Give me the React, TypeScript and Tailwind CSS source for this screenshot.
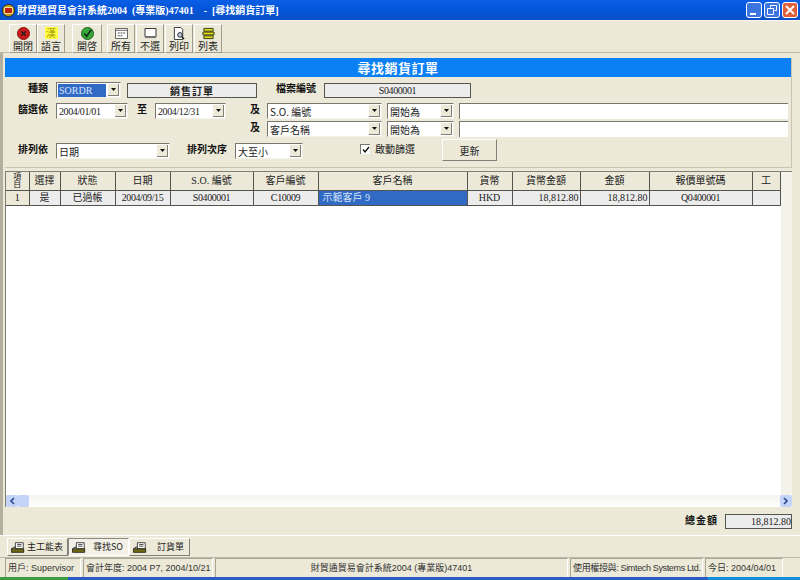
import type { ReactNode } from 'react';

const cjk = '"Noto Sans CJK TC", "Noto Sans CJK SC", sans-serif';
const dataFont = `"Liberation Serif", ${cjk}`;
const uiFont = `"Liberation Sans", ${cjk}`;

const columns = [
  { label: '項目', w: 23 },
  { label: '選擇', w: 31 },
  { label: '狀態', w: 55 },
  { label: '日期', w: 55 },
  { label: 'S.O. 編號', w: 83 },
  { label: '客戶編號', w: 65 },
  { label: '客戶名稱', w: 149 },
  { label: '貨幣', w: 45 },
  { label: '貨幣金額', w: 68 },
  { label: '金額', w: 69 },
  { label: '報價單號碼', w: 103 },
  { label: '工', w: 28 },
];

const row = ['1', '是', '已過帳', '2004/09/15', 'S0400001', 'C10009', '示範客戶 9', 'HKD', '18,812.80', '18,812.80', 'Q0400001', ''];

function ToolButton({ label, icon, w = 'w-[28px]' }: { label: string; icon: ReactNode; w?: string }) {
  return (
    <div className={`${w} h-[29px] flex flex-col items-center bg-[#ece9d8] border-r border-b border-[#a09c8c] border-l border-l-white border-t border-t-white`}>
      <div className="h-[14px] mt-px flex items-center justify-center">{icon}</div>
      <div className="text-[10px] leading-[11px] text-[#222] whitespace-nowrap">{label}</div>
    </div>
  );
}

function Arrow() {
  return (
    <div className="w-[11px] h-[12px] shrink-0 mr-px flex items-center justify-center bg-[#ece9d8] border-r border-b border-[#808078]">
      <svg width="7" height="4" viewBox="0 0 7 4"><path d="M1 0h5L3.5 3z" fill="#111" /></svg>
    </div>
  );
}

function Combo({ w, text, serif, selected, tight }: { w: string; text: string; serif?: boolean; selected?: boolean; tight?: boolean }) {
  return (
    <div className={`${w} h-[16px] shrink-0 flex items-center bg-white border-t border-l border-[#77776f] border-r border-r-[#f4f2e8] border-b border-b-[#f4f2e8]`}>
      <div
        className={`flex-1 min-w-0 h-[13px] ml-px mr-[2px] pl-px text-[10px] leading-[13px] whitespace-nowrap overflow-hidden ${selected ? 'bg-[#316ac5] text-[#d8e4f8]' : 'text-[#222]'} ${tight ? 'tracking-[-0.4px]' : ''}`}
        style={{ fontFamily: serif ? dataFont : cjk }}
      >
        {text}
      </div>
      <Arrow />
    </div>
  );
}

function Label({ w, text, className = '' }: { w: string; text: string; className?: string }) {
  return <div className={`${w} shrink-0 text-right text-[10px] leading-[11px] pb-[5px] font-bold text-[#111] whitespace-nowrap ${className}`}>{text}</div>;
}

function ReadBox({ w, text, bold, serif }: { w: string; text: string; bold?: boolean; serif?: boolean }) {
  return (
    <div
      className={`${w} h-[15px] shrink-0 flex items-center justify-center bg-[#ececec] border border-[#55554f] text-[10px] text-[#222] ${bold ? 'font-bold tracking-[1px]' : ''} ${serif ? 'tracking-[-0.4px]' : ''}`}
      style={{ fontFamily: serif ? dataFont : cjk }}
    >
      {text}
    </div>
  );
}

function TabIcon() {
  return (
    <svg width="14" height="11" viewBox="0 0 16 12" className="shrink-0">
      <path d="M5 .5h9v7H5z" fill="#fff" stroke="#333" />
      <path d="M7 2.5h5M7 4.5h5" stroke="#333" />
      <path d="M.5 7.5h14v4H.5z" fill="#6f6a10" stroke="#222" />
      <path d="M.5 7.5l3-2h2" fill="none" stroke="#222" />
    </svg>
  );
}

function Tab({ w, text, gap, active }: { w: string; text: string; gap: string; active?: boolean }) {
  return (
    <div className={`${w} h-[18px] flex items-center pl-[3px] text-[9px] text-[#222] whitespace-nowrap border ${active ? 'bg-[#f3f1e6] border-t-[#888] border-l-[#888] border-r-white border-b-white' : 'bg-[#ece9d8] border-t-white border-l-white border-r-[#808078] border-b-[#808078]'}`}>
      <TabIcon />
      <span className={gap}>{text}</span>
    </div>
  );
}

function StatusCell({ w, children, center, tight }: { w: string; children: ReactNode; center?: boolean; tight?: boolean }) {
  return (
    <div
      className={`${w} h-[19px] shrink-0 flex items-center px-[2px] text-[9px] leading-none text-[#333] whitespace-nowrap overflow-hidden border-t border-l border-[#a8a594] border-r border-r-white ${center ? 'justify-center' : ''} ${tight ? 'tracking-[-0.35px]' : ''}`}
    >
      {children}
    </div>
  );
}

function WinButton({ children, className }: { children: ReactNode; className: string }) {
  return <div className={`w-[16px] h-[16px] rounded-[3px] border border-white flex items-center justify-center ${className}`}>{children}</div>;
}

export default function App() {
  return (
    <div className="w-[800px] h-[580px] overflow-hidden flex flex-col bg-[#ece9d8]" style={{ fontFamily: cjk }}>
      {/* title bar */}
      <div className="h-[20px] shrink-0 flex items-center pl-[2px] pr-[2px] bg-gradient-to-b from-[#0a5fe6] via-[#0354d8] to-[#0a50c8]">
        <svg width="13" height="13" viewBox="0 0 15 15" className="shrink-0">
          <circle cx="7.5" cy="7.5" r="7" fill="#c8a010" stroke="#222" />
          <rect x="3" y="4" width="9" height="7" fill="#c02010" stroke="#fff2a0" />
        </svg>
        <div className="ml-[2px] text-[10px] font-bold text-white whitespace-nowrap" style={{ fontFamily: dataFont }}>
          財貿通貿易會計系統2004&nbsp;&nbsp;(專業版)47401&nbsp;&nbsp;&nbsp;&nbsp;-&nbsp;&nbsp;[尋找銷貨訂單]
        </div>
        <div className="ml-auto flex gap-[2px]">
          <WinButton className="bg-[#3c74e0]">
            <div className="w-[6px] h-[2px] bg-white mt-[7px] mr-[3px]" />
          </WinButton>
          <WinButton className="bg-[#3c74e0]">
            <svg width="10" height="10" viewBox="0 0 10 10" fill="none" stroke="#fff"><path d="M3.5 2.5V.5h6v5h-2" /><path d="M.5 3.5h6v6h-6z" /></svg>
          </WinButton>
          <WinButton className="bg-[#e0603a]">
            <svg width="10" height="10" viewBox="0 0 10 10" stroke="#fff" strokeWidth="2"><path d="M1 1l8 8M9 1L1 9" /></svg>
          </WinButton>
        </div>
      </div>

      {/* toolbar */}
      <div className="h-[33px] shrink-0 flex items-start pt-[3px] pl-[9px] border-t border-[#f8f6ec] border-b border-b-[#bdb9a6]">
        <ToolButton label="開閉" icon={
          <svg width="13" height="13" viewBox="0 0 14 14">
            <circle cx="7" cy="7" r="6.5" fill="#d01818" stroke="#7a1010" />
            <path d="M4.5 4.5l5 5M9.5 4.5l-5 5" stroke="#222" strokeWidth="1.6" />
          </svg>
        } />
        <ToolButton label="語言" icon={<div className="w-[13px] h-[12px] overflow-hidden bg-[#ffff40] text-[#a09000] text-[10px] leading-[12px] text-center">漢</div>} />
        <div className="w-[7px]" />
        <ToolButton w="w-[30px]" label="開啓" icon={
          <svg width="13" height="13" viewBox="0 0 14 14">
            <circle cx="7" cy="7" r="6.5" fill="#38a838" stroke="#185818" />
            <path d="M3.5 7l2.5 3 5-7" fill="none" stroke="#10301a" strokeWidth="1.8" />
          </svg>
        } />
        <div className="w-[5px]" />
        <ToolButton label="所有" icon={
          <svg width="13" height="11" viewBox="0 0 14 12">
            <path d="M.5.5h13v11H.5z" fill="#fff" stroke="#555" />
            <path d="M.5 2.5h13" stroke="#555" />
            <path d="M3 5h2v1H3zM6 5h2v1H6zM9 5h2v1H9zM3 8h2v1H3zM6 8h2v1H6z" fill="#444" />
          </svg>
        } />
        <div className="w-px" />
        <ToolButton label="不選" icon={
          <svg width="13" height="11" viewBox="0 0 14 12">
            <path d="M1 .5h12v9H1z" fill="#fff" stroke="#222" />
            <path d="M1 9h12v2H1z" fill="#777" />
          </svg>
        } />
        <div className="w-px" />
        <ToolButton label="列印" icon={
          <svg width="12" height="13" viewBox="0 0 13 14">
            <path d="M1.5.5h7l2 2v11h-9z" fill="#fff" stroke="#333" />
            <circle cx="7.5" cy="8.5" r="2.5" fill="#bcd" stroke="#222" />
            <path d="M9.5 10.5l2.5 2.5" stroke="#222" strokeWidth="1.6" />
          </svg>
        } />
        <div className="w-px" />
        <ToolButton label="列表" icon={
          <svg width="13" height="13" viewBox="0 0 14 14">
            <path d="M2 1.5h10v3H2zM1 5.5h12v3H1zM2 9.5h10v3H2z" fill="#e8d820" stroke="#2a3a10" />
          </svg>
        } />
      </div>

      {/* body */}
      <div className="flex-1 min-h-0 flex flex-col border-l-[3px] border-[#b4b09f] pl-[2px] pt-[5px]">
        {/* search form */}
        <div className="w-[787px] h-[110px] shrink-0 border-b border-r border-[#c8c5b2]">
          <div className="h-[19px] bg-[#0a80f4] text-center text-white text-[13px] leading-[19px] font-bold tracking-[0.5px]">尋找銷貨訂單</div>

          <div className="flex items-center pt-[5px]">
            <Label w="w-[43px]" text="種類" />
            <Combo w="w-[65px] ml-[8px]" text="SORDR" serif selected />
            <div className="w-[6px]" />
            <ReadBox w="w-[130px]" text="銷售訂單" bold />
            <Label w="w-[42px] ml-[17px]" text="檔案編號" />
            <div className="w-[8px]" />
            <ReadBox w="w-[147px]" text="S0400001" serif />
          </div>

          <div className="flex items-center pt-[5px]">
            <Label w="w-[43px]" text="篩選依" />
            <Combo w="w-[72px] ml-[8px]" text="2004/01/01" serif tight />
            <Label w="w-[19px]" text="至" />
            <Combo w="w-[71px] ml-[8px]" text="2004/12/31" serif tight />
            <Label w="w-[34px]" text="及" />
            <Combo w="w-[115px] ml-[7px]" text="S.O. 編號" />
            <Combo w="w-[67px] ml-[5px]" text="開始為" />
            <div className="w-[329px] ml-[5px] h-[16px] bg-white border-t border-l border-[#77776f]" />
          </div>

          <div className="flex items-center pt-[2px]">
            <Label w="w-[255px]" text="及" />
            <Combo w="w-[115px] ml-[7px]" text="客戶名稱" />
            <Combo w="w-[67px] ml-[5px]" text="開始為" />
            <div className="w-[329px] ml-[5px] h-[16px] bg-white border-t border-l border-[#77776f]" />
          </div>

          <div className="flex items-start pt-[4px]">
            <Label w="w-[43px] mt-[2px]" text="排列依" />
            <Combo w="w-[114px] ml-[8px] mt-[2px]" text="日期" />
            <Label w="w-[57px] mt-[2px]" text="排列次序" />
            <Combo w="w-[68px] ml-[8px] mt-[2px]" text="大至小" />
            <div className="ml-[57px] mt-[2px] flex items-center">
              <div className="w-[10px] h-[10px] bg-white border-t border-l border-[#77776f] flex items-center justify-center">
                <svg width="8" height="8" viewBox="0 0 8 8"><path d="M1 3.5l2 2.5 4-5" fill="none" stroke="#111" strokeWidth="1.4" /></svg>
              </div>
              <span className="ml-[5px] text-[10px] leading-[12px] text-[#222]">啟動篩選</span>
            </div>
            <div className="ml-[27px] -mt-[2px] w-[55px] h-[22px] flex items-center justify-center bg-[#ece9d8] text-[10px] text-[#222] border border-t-white border-l-white border-r-[#808078] border-b-[#808078]">更新</div>
          </div>
        </div>

        {/* grid */}
        <div className="mt-[3px] w-[787px] h-[336px] shrink-0 flex flex-col bg-white border-t border-l border-[#808078]">
          <div className="flex-1 min-h-0 flex overflow-hidden">
            <table className="table-fixed border-collapse h-fit w-[774px] shrink-0" style={{ fontFamily: dataFont }}>
              <colgroup>
                {columns.map(c => <col key={c.label} style={{ width: c.w }} />)}
              </colgroup>
              <thead>
                <tr className="h-[18px]">
                  {columns.map((c, i) => (
                    <th key={c.label} className={`p-0 bg-[#ece9d8] border-r border-b border-[#55554f] font-normal text-[#222] overflow-hidden ${i === 0 ? 'px-[7px] text-[8px] leading-[8px] whitespace-normal break-all' : 'text-[10px] leading-[17px] whitespace-nowrap'}`}>
                      {c.label}
                    </th>
                  ))}
                </tr>
              </thead>
              <tbody>
                <tr className="h-[15px]">
                  {row.map((v, i) => (
                    <td
                      key={i}
                      className={`p-0 border-r border-b border-[#55554f] text-[10px] leading-[14px] whitespace-nowrap overflow-hidden ${
                        i === 0 ? 'bg-[#ece9d8] text-center text-[#111]' : i === 6 ? 'bg-[#316ac5] text-[#d8e4f8] pl-[4px]' : i === 8 || i === 9 ? 'bg-[#ececec] text-right pr-[1px] text-[#222]' : 'bg-[#ececec] text-center text-[#222]'
                      } ${i === 3 || i === 4 || i === 5 || i === 10 ? 'tracking-[-0.4px]' : ''}`}
                    >
                      {v}
                    </td>
                  ))}
                </tr>
              </tbody>
            </table>
            <div className="flex-1 bg-[#f4f3ea]" />
          </div>
          {/* horizontal scroll */}
          <div className="h-[12px] shrink-0 flex bg-gradient-to-b from-[#f4f3ee] to-white">
            <div className="w-[12px] h-[12px] rounded-[2px] bg-[#c4d4f8] flex items-center justify-center">
              <svg width="6" height="8" viewBox="0 0 6 8"><path d="M5 1L2 4l3 3" fill="none" stroke="#2a4a90" strokeWidth="1.6" /></svg>
            </div>
            <div className="w-[11px] h-[12px] rounded-[2px] bg-[#c4d4f8]" />
            <div className="ml-auto w-[12px] h-[12px] rounded-[2px] bg-[#c4d4f8] flex items-center justify-center">
              <svg width="6" height="8" viewBox="0 0 6 8"><path d="M1 1l3 3-3 3" fill="none" stroke="#2a4a90" strokeWidth="1.6" /></svg>
            </div>
          </div>
        </div>

        {/* total */}
        <div className="w-[787px] flex items-start justify-end pt-[7px] h-[25px] shrink-0">
          <span className="text-[10px] leading-[12px] font-bold text-[#111] tracking-[1px]">總金額</span>
          <div className="ml-[7px] w-[67px] h-[15px] bg-[#ececec] border border-[#55554f] text-right text-[10px] leading-[14px] text-[#222]" style={{ fontFamily: dataFont }}>18,812.80</div>
        </div>
      </div>

      {/* tabs */}
      <div className="h-[23px] shrink-0 flex pl-[7px] pt-[2px] border-t border-white border-b border-b-[#bdb9a6]">
        <Tab w="w-[61px]" text="主工能表" gap="ml-[2px]" />
        <Tab w="w-[61px]" text="尋找SO" gap="ml-[7px]" active />
        <Tab w="w-[61px]" text="訂貨單" gap="ml-[10px]" />
      </div>

      {/* status bar */}
      <div className="h-[19px] shrink-0 flex pl-[5px] gap-[2px]" style={{ fontFamily: uiFont }}>
        <StatusCell w="w-[76px]">用戶: Supervisor</StatusCell>
        <StatusCell w="w-[130px]">會計年度: 2004 P7, 2004/10/21</StatusCell>
        <StatusCell w="w-[353px]" center>財貿通貿易會計系統2004 (專業版)47401</StatusCell>
        <StatusCell w="w-[133px]" tight>使用權授與: Simtech Systems Ltd.</StatusCell>
        <StatusCell w="w-[78px]">今日: 2004/04/01</StatusCell>
      </div>

      {/* taskbar strip */}
      <div className="h-[3px] shrink-0 flex">
        <div className="w-[68px] bg-[#3c9a40]" />
        <div className="flex-1 bg-[#2a5cc8]" />
        <div className="w-[92px] bg-[#1290e0]" />
      </div>
    </div>
  );
}
